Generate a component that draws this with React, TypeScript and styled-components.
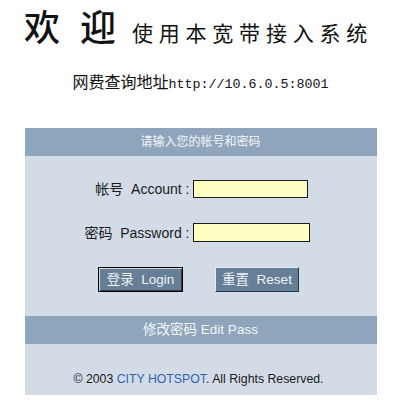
import React from "react";
import styled, { createGlobalStyle } from "styled-components";

const GlobalStyle = createGlobalStyle`
  body {
    margin: 0;
    background: #ffffff;
    font-family: "Liberation Sans", "Noto Sans CJK SC", sans-serif;
  }
`;

const cjk = `"Noto Sans CJK SC", "Liberation Sans", sans-serif`;

const Page = styled.div`
  width: 401px;
  display: flex;
  flex-direction: column;
  align-items: center;
`;

const Title = styled.h1`
  margin: 0;
  height: 58px;
  box-sizing: border-box;
  display: flex;
  align-items: baseline;
  justify-content: center;
  line-height: 50px;
  font-weight: normal;
  color: #111;
  font-family: ${cjk};
  padding-right: 4px;
`;

const Big = styled.span`
  font-size: 36px;
  letter-spacing: 20px;
  font-weight: 500;
  margin-right: -4px;
`;

const Small = styled.span`
  font-size: 21px;
  letter-spacing: 5.8px;
`;

const UrlLine = styled.div`
  margin-top: 13px;
  height: 20px;
  line-height: 20px;
  font-size: 16px;
  color: #111;
  font-family: ${cjk};
  white-space: nowrap;
`;

const Mono = styled.span`
  font-family: "Liberation Mono", monospace;
  font-size: 13.33px;
`;

const Panel = styled.div`
  margin-top: 37px;
  width: 352px;
  background: #d3dce6;
`;

const Bar = styled.div<{ $size?: number }>`
  height: 28px;
  line-height: 28px;
  background: #8fa5bc;
  color: #f4f7fa;
  text-align: center;
  font-size: ${(p) => p.$size ?? 12}px;
`;

const Form = styled.div`
  padding: 24px 0;
  display: grid;
  grid-template-columns: 165px auto;
  column-gap: 3px;
  row-gap: 25px;
  align-items: center;
`;

const Label = styled.label`
  text-align: right;
  font-size: 14px;
  line-height: 18px;
  height: 18px;
  color: #1a1a1a;
  white-space: pre;
`;

const Input = styled.input<{ $w: number; $h: number }>`
  box-sizing: border-box;
  width: ${(p) => p.$w}px;
  height: ${(p) => p.$h}px;
  margin: 0;
  padding: 0 2px;
  background: #ffffc4;
  border: 1px solid #1c1c1c;
  outline: none;
`;

const Buttons = styled.div`
  grid-column: 1 / -1;
  display: flex;
  justify-content: center;
  gap: 32px;
  padding-right: 4px;
`;

const Button = styled.button<{ $default?: boolean }>`
  box-sizing: border-box;
  width: ${(p) => (p.$default ? 85 : 84)}px;
  height: 25px;
  margin: 0;
  padding: 0;
  background: #667f97;
  color: #eef2f6;
  font-family: "Liberation Sans", "Noto Sans CJK SC", sans-serif;
  font-size: 13.5px;
  line-height: 18px;
  white-space: pre;
  border: 1px solid;
  border-color: ${(p) =>
    p.$default ? "#000000" : "#e4eaf0 #22354a #22354a #e4eaf0"};
  box-shadow: ${(p) =>
    p.$default ? "inset 1px 1px #d0d9e2, inset -1px -1px #2a3c50" : "none"};
`;

const Footer = styled.div`
  height: 51px;
  box-sizing: border-box;
  padding-top: 27px;
  padding-right: 4px;
  line-height: 16px;
  text-align: center;
  font-size: 12.3px;
  color: #1a1a1a;
`;

const Link = styled.a`
  color: #2f62b4;
  text-decoration: none;
`;

export default function App() {
  return (
    <Page>
      <GlobalStyle />
      <Title>
        <Big>欢迎</Big>
        <Small>使用本宽带接入系统</Small>
      </Title>
      <UrlLine>
        网费查询地址<Mono>http://10.6.0.5:8001</Mono>
      </UrlLine>
      <Panel>
        <Bar>请输入您的帐号和密码</Bar>
        <Form>
          <Label>{"帐号  Account :"}</Label>
          <Input $w={115} $h={18} />
          <Label>{"密码  Password :"}</Label>
          <Input $w={117} $h={19} type="password" />
          <Buttons>
            <Button $default>{"登录  Login"}</Button>
            <Button>{"重置  Reset"}</Button>
          </Buttons>
        </Form>
        <Bar $size={13.5}>{"修改密码  Edit Pass"}</Bar>
        <Footer>
          © 2003 <Link>CITY HOTSPOT</Link>. All Rights Reserved.
        </Footer>
      </Panel>
    </Page>
  );
}
